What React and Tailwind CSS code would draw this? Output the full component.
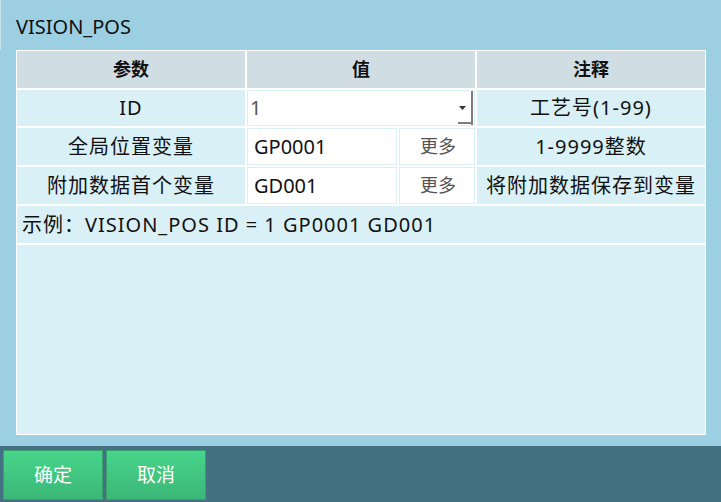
import React from 'react';

// Dialog: VISION_POS parameter editor
const font = { fontFamily: '"Noto Sans", "Noto Sans CJK SC", sans-serif' };

const rows = [
  { name: '全局位置变量', value: 'GP0001', note: '1-9999整数', h: 'h-[37px]' },
  { name: '附加数据首个变量', value: 'GD001', note: '将附加数据保存到变量', h: 'h-[37px]' },
];

const LabelCell = ({ children }) => (
  <div className="bg-[#D9F0F6] flex items-center justify-center text-[20px] tracking-[1px] text-[#111]">{children}</div>
);

export default function App() {
  return (
    <div className="w-[721px] h-[502px] flex flex-col bg-[#9BCFE1] overflow-hidden" style={font}>
      {/* título */}
      <div className="h-[50px] flex items-center pl-[15px] pt-[3px] text-[20px] text-[#111] border-l border-[#c9e2ea]">
        VISION_POS
      </div>

      {/* painel */}
      <div className="ml-4 w-[690px] h-[385px] border border-white bg-[#D9F0F6] flex flex-col">
        <div className="flex flex-col gap-[2px] bg-white pb-[2px]">
          {/* cabeçalho */}
          <div className="h-[37px] grid grid-cols-[228px_228px_228px] gap-[2px]">
            {['参数', '值', '注释'].map((t) => (
              <div key={t} className="bg-[#D0DDE2] flex items-center justify-center text-[18px] font-bold text-[#111]">
                {t}
              </div>
            ))}
          </div>

          {/* ID */}
          <div className="h-[36px] grid grid-cols-[228px_228px_228px] gap-[2px]">
            <LabelCell>ID</LabelCell>
            <div className="relative bg-white border border-[#D9F0F6] flex items-center pl-[2px] text-[20px] text-[#555]">
              1
              <svg className="absolute right-[8px] top-[15px]" width="7" height="4" viewBox="0 0 7 4">
                <path d="M0 0h7L3.5 4z" fill="#333" />
              </svg>
              <div className="absolute right-[1px] top-0 bottom-0 w-[2px] bg-[#7d7d7d]" />
              <div className="absolute right-[1px] bottom-[1px] w-[15px] h-[2px] bg-[#7d7d7d]" />
            </div>
            <LabelCell>工艺号(1-99)</LabelCell>
          </div>

          {rows.map((r) => (
            <div key={r.name} className={`${r.h} grid grid-cols-[228px_150px_76px_228px] gap-[2px]`}>
              <LabelCell>{r.name}</LabelCell>
              <div className="bg-white border border-[#D9F0F6] flex items-center pl-[6px] text-[20px] text-[#111]">
                {r.value}
              </div>
              <div className="bg-white border border-[#D9F0F6] flex items-center justify-center pl-[2px] text-[18px] text-[#555]">
                更多
              </div>
              <LabelCell>{r.note}</LabelCell>
            </div>
          ))}

          {/* exemplo */}
          <div className="h-[37px] bg-[#D9F0F6] flex items-center pl-[5px] text-[20px] tracking-[1px] text-[#111]">
            示例：VISION_POS ID = 1 GP0001 GD001
          </div>
        </div>
        <div className="flex-1" />
      </div>

      <div className="h-[11px]" />

      {/* barra inferior */}
      <div className="flex-1 bg-[#437181] flex items-start gap-[3px] pl-[3px] pt-[4px]">
        {['确定', '取消'].map((t) => (
          <button
            key={t}
            className="w-[100px] h-[50px] border border-[#3a9f6d] bg-gradient-to-b from-[#48D58B] to-[#3BB777] text-white text-[19px] flex items-center justify-center"
          >
            {t}
          </button>
        ))}
      </div>
    </div>
  );
}
